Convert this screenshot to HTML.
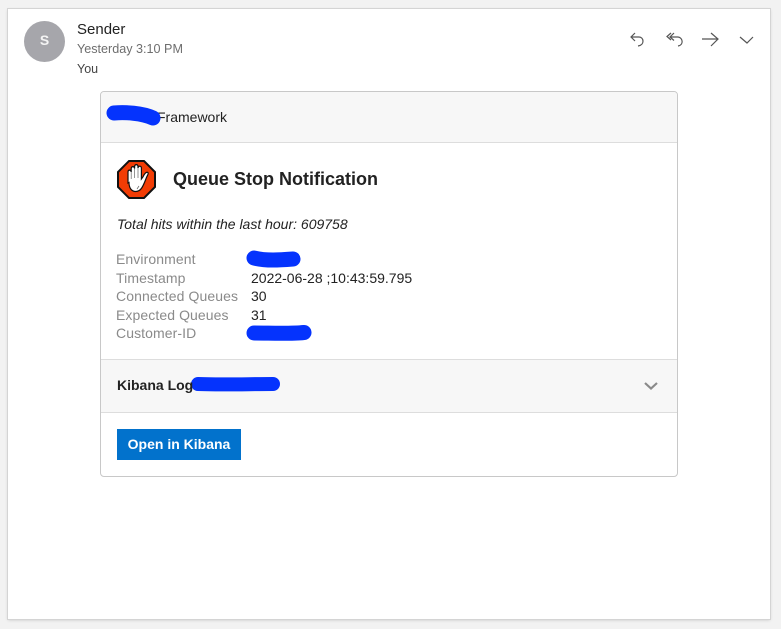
<!DOCTYPE html>
<html><head><meta charset="utf-8">
<style>
html,body{margin:0;padding:0;width:781px;height:629px;overflow:hidden;background:#f2f2f2;font-family:"Liberation Sans",sans-serif;color:#222}
.a{position:absolute;white-space:nowrap}
#panel{left:8px;top:9px;width:762px;height:610px;background:#fff;box-shadow:0 0 0 1px #d4d4d4,0 1px 3px #c4c4c4}
#card{left:100px;top:91px;width:576px;height:384px;background:#fff;border:1px solid #c8c8c8;border-radius:4px;overflow:hidden}
.lab{left:116px;font-size:14px;line-height:18px;color:#8a8a8a;letter-spacing:.09px}
.val{left:251px;font-size:14px;line-height:18px;color:#222}
</style></head><body>
<div class="a" id="panel"></div>
<div class="a" style="left:24px;top:21px;width:41px;height:41px;border-radius:50%;background:#a6a6ab;color:#f4f4f4;font-weight:bold;font-size:14px;line-height:39px;text-align:center">S</div>
<div class="a" style="left:77px;top:21px;font-size:15px;line-height:17px;color:#222">Sender</div>
<div class="a" style="left:77px;top:42px;font-size:12.6px;line-height:15px;color:#6e6e6e">Yesterday 3:10 PM</div>
<div class="a" style="left:77px;top:62px;font-size:12.5px;line-height:15px;color:#444">You</div>
<svg class="a" style="left:620px;top:20px" width="150" height="40" fill="none" stroke="#555" stroke-width="1.200">
<path d="M15 13l-4 4 4 4M11 17h8c5 0 6 8 -1 9"/>
<path d="M51 13l-4 3.500 4 3.500M54 13l-4 4 4 3.500M50 17h8c5 .5 6 8 0 9"/>
<path d="M82 19h16M91 13l7 6-7 7"/>
<path d="M120 17l7 6 6-6"/>
</svg>
<div class="a" id="card">
<div class="a" style="left:0;top:0;width:576px;height:50px;background:#f7f7f7;border-bottom:1px solid #ddd"></div>
<div class="a" style="left:0;top:267px;width:576px;height:52px;background:#f7f7f7;border-top:1px solid #ddd;border-bottom:1px solid #ddd"></div>
</div>
<div class="a" style="left:157px;top:108px;font-size:14px;line-height:18px;color:#222">Framework</div>
<svg class="a" style="left:0;top:0;pointer-events:none" width="781" height="629" fill="none" stroke="#0533fd" stroke-linecap="round">
<path d="M114 113C125 112 142 113 153 118" stroke-width="15"/>
<path d="M254 258C266 261 280 260 293 259" stroke-width="15"/>
<path d="M254 333C270 333 290 334 304 332.500" stroke-width="15"/>
<path d="M198 384C220 385 250 384 273 384" stroke-width="14"/>
</svg>
<svg class="a" style="left:117px;top:160px" width="40" height="40" viewBox="0 0 40 40">
<path d="M12 1h15l11 11v15L27 38H12L1 27V12z" fill="#f23c05" stroke="#111" stroke-width="2"/>
<path d="M11 23V12c0-2.500 3-2.500 3.200 0V8.500c0-2.500 3.300-2.500 3.400 0V6.500c0-2.500 3.300-2.500 3.400 0V8c.2-2.400 3.300-2.400 3.400 0v11l1.500-2c1.500-3.500 3.600-5.500 5-4.500 1 1-.4 2.700-1.200 4.500-1.500 3.500-2.700 7.500-5 11-1.500 2.300-3 3.500-6 3.500-4.500 0-6.700-4-6.700-9z" fill="#fff" stroke="#111" stroke-width="1.200"/>
<path d="M14.200 12v7M17.600 8.500V18M21 8v10M22 26l-2 3" stroke="#666" stroke-width=".7" fill="none"/>
</svg>
<div class="a" style="left:173px;top:169px;font-size:18px;line-height:21px;font-weight:bold;color:#222">Queue Stop Notification</div>
<div class="a" style="left:117px;top:216px;font-size:14px;line-height:17px;font-style:italic;color:#222">Total hits within the last hour: 609758</div>
<div class="a lab" style="top:250px">Environment</div>
<div class="a lab" style="top:269px">Timestamp</div>
<div class="a lab" style="top:287px">Connected Queues</div>
<div class="a lab" style="top:306px">Expected Queues</div>
<div class="a lab" style="top:324px">Customer-ID</div>
<div class="a val" style="top:269px">2022-06-28 ;10:43:59.795</div>
<div class="a val" style="top:287px">30</div>
<div class="a val" style="top:306px">31</div>
<div class="a" style="left:117px;top:377px;font-size:14px;line-height:17px;font-weight:bold;color:#222">Kibana Log</div>
<svg class="a" style="left:642px;top:380px" width="18" height="12" fill="none" stroke="#8a8a8a" stroke-width="2.200"><path d="M3 3l6 5.500L15 3"/></svg>
<div class="a" style="left:117px;top:429px;width:124px;height:31px;background:#0272cc;color:#fff;font-size:14px;font-weight:bold;line-height:30px;text-align:center">Open in Kibana</div>
</body></html>
